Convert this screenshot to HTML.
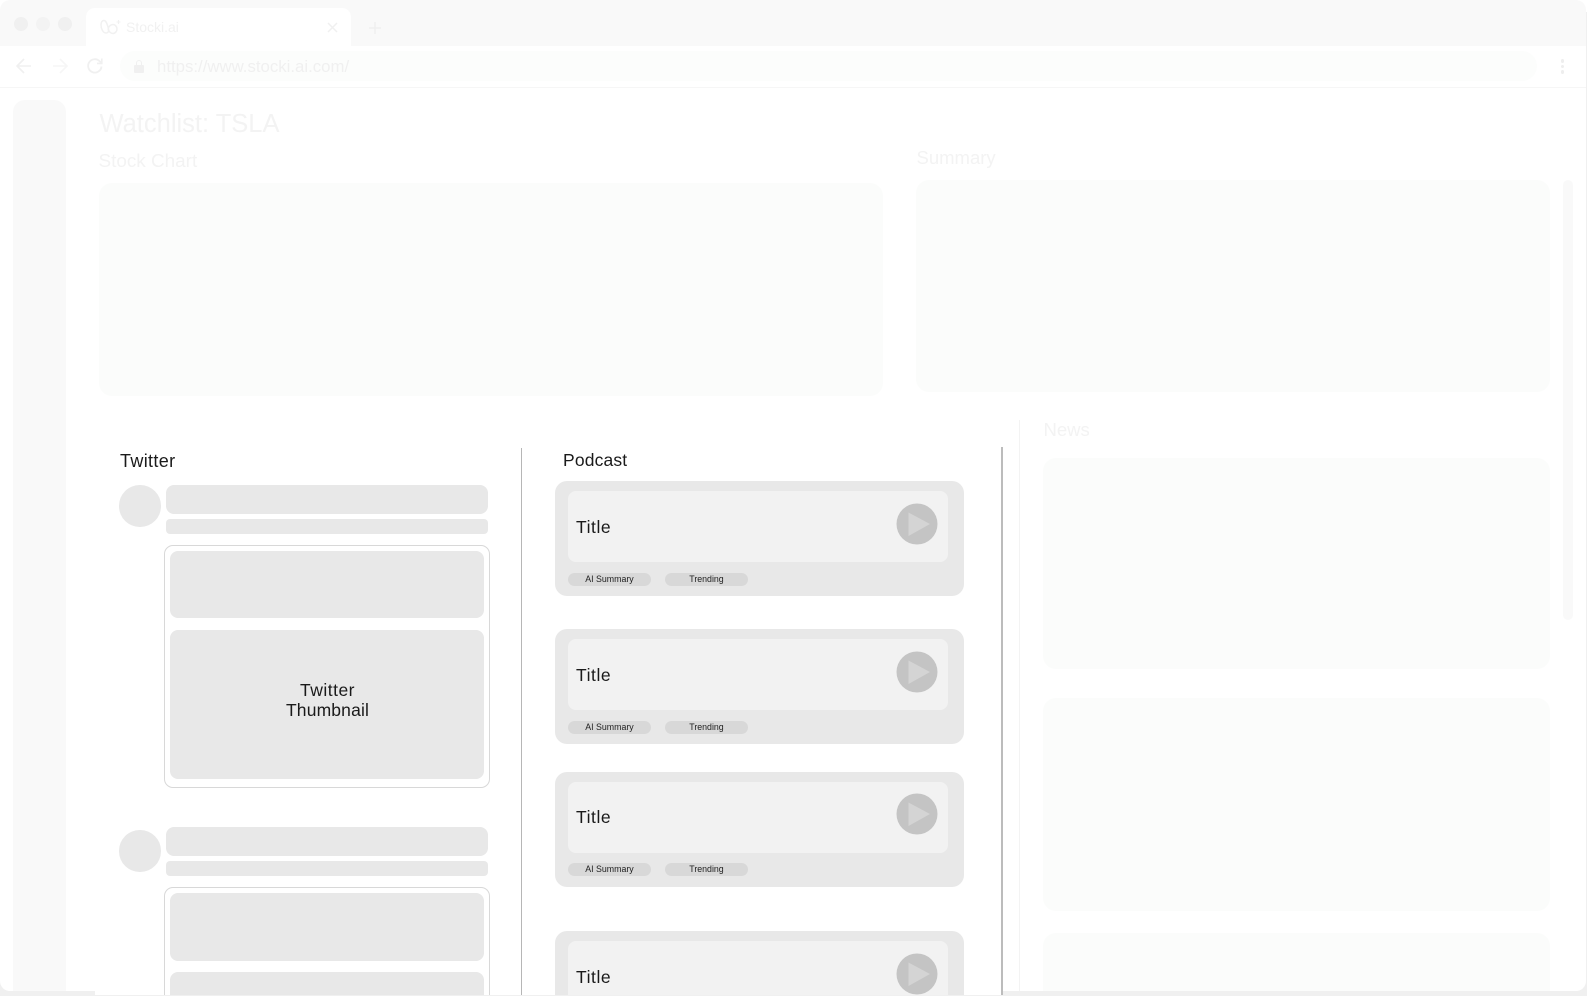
<!DOCTYPE html>
<html>
<head>
<meta charset="utf-8">
<title>Stocki.ai</title>
<style>
html,body{margin:0;padding:0;background:#fff;width:1587px;height:996px;overflow:hidden}
#p{position:relative;width:1587px;height:996px;overflow:hidden;background:#f0f0f0;font-family:"Liberation Sans",sans-serif}
#p div,#p svg{position:absolute}
.t{white-space:nowrap;color:#1a1a1a;line-height:1}
.g{color:#f3f3f3}
.f{background:#fbfcfb;border-radius:13px}
.e{background:#e8e8e8}
.pc{left:555px;width:408.500px;height:115px;background:#e8e8e8;border-radius:12px}
.pi{left:13px;top:10px;width:380px;height:71px;background:#f2f2f2;border-radius:8px}
.pl{top:91.500px;width:83px;height:13px;border-radius:7px;background:#d8d8d8;font-size:8.800px;line-height:13px;text-align:center;color:#222}
.pt{left:21px;top:37.500px;font-size:17.500px;letter-spacing:.55px}
</style>
</head>
<body>
<div id="p">
<div style="left:0;top:0;width:12px;height:12px;background:#fff"></div>
<div style="right:0;top:0;width:12px;height:12px;background:#fff"></div>
<div style="left:0;top:0;width:1586px;height:991px;background:#fff;border-radius:10px"></div>
<div style="left:0;top:0;width:1586px;height:46px;background:#f9f9f9;border-radius:10px 10px 0 0"></div>
<div style="left:14px;top:17px;width:14px;height:14px;border-radius:50%;background:#f0f0f0"></div>
<div style="left:36px;top:17px;width:14px;height:14px;border-radius:50%;background:#f3f3f3"></div>
<div style="left:58px;top:17px;width:14px;height:14px;border-radius:50%;background:#f0f0f0"></div>
<div style="left:86px;top:8px;width:265px;height:38px;background:#fff;border-radius:9px 9px 0 0"></div>
<svg style="left:98px;top:16px" width="24" height="22" viewBox="0 0 24 22" fill="none" stroke="#f1f1f1" stroke-width="1.500"><path d="M6 4.500c-2 0-3 2-3 4.500 0 3.500 2 8 5 8s3-3 2-6C9 7.500 8 4.500 6 4.500z"/><path d="M10 13c1-3 2.500-4.500 5-4.500 2 0 4 2 4 4.500s-2 4.500-4 4.500c-2.500 0-4-2-5-4.500"/><path d="M20.500 4v4M18.500 6h4" stroke-width="1.100"/></svg>
<div class="t g" style="left:126px;top:20px;font-size:14px;color:#f1f1f1">Stocki.ai</div>
<svg style="left:326px;top:21px" width="13" height="13" viewBox="0 0 13 13" stroke="#f0f0f0" stroke-width="1.500"><path d="M2 2l9 9M11 2l-9 9"/></svg>
<svg style="left:367.500px;top:21px" width="14" height="14" viewBox="0 0 14 14" stroke="#f0f0f0" stroke-width="1.500"><path d="M7 1v12M1 7h12"/></svg>
<div style="left:0;top:87px;width:1586px;height:1px;background:#f6f6f6"></div>
<svg style="left:15px;top:57px" width="18" height="18" viewBox="0 0 18 18" fill="none" stroke="#f0f0f0" stroke-width="1.600"><path d="M16 9H2M9 2L2 9l7 7"/></svg>
<svg style="left:51px;top:57px" width="18" height="18" viewBox="0 0 18 18" fill="none" stroke="#f6f6f6" stroke-width="1.600"><path d="M2 9h14M9 2l7 7-7 7"/></svg>
<svg style="left:86px;top:57px" width="18" height="18" viewBox="0 0 18 18" fill="none" stroke="#f0f0f0" stroke-width="1.800"><path d="M15.500 9.500a6.700 6.700 0 1 1-1.800-5.200L15.500 6"/><path d="M15.800 1.500V6.400H11" stroke-width="1.600"/></svg>
<div style="left:120px;top:51px;width:1417px;height:30px;border-radius:15px;background:#fcfdfc"></div>
<div style="left:134px;top:65px;width:10px;height:8px;background:#f0f0f0;border-radius:1px"></div>
<div style="left:136px;top:60px;width:4px;height:5px;border:1.300px solid #f0f0f0;border-bottom:0;border-radius:3px 3px 0 0"></div>
<div class="t" style="left:157px;top:59px;font-size:16.800px;color:#f0f0f0">https://www.stocki.ai.com/</div>
<div style="left:1560.500px;top:59px;width:3.500px;height:3.500px;border-radius:50%;background:#eee"></div>
<div style="left:1560.500px;top:64.500px;width:3.500px;height:3.500px;border-radius:50%;background:#eee"></div>
<div style="left:1560.500px;top:70px;width:3.500px;height:3.500px;border-radius:50%;background:#eee"></div>

<div style="left:13px;top:100px;width:53px;height:891px;background:#f9f9f9;border-radius:12px 12px 0 0"></div>
<div class="t g" style="left:99.500px;top:111.500px;font-size:25.500px">Watchlist: TSLA</div>
<div class="t g" style="left:98.500px;top:153px;font-size:18.900px">Stock Chart</div>
<div class="t g" style="left:916.500px;top:148.500px;font-size:18.500px">Summary</div>
<div class="f" style="left:98.500px;top:183px;width:784.500px;height:213px"></div>
<div class="f" style="left:916px;top:180px;width:634px;height:212px"></div>
<div style="left:1563px;top:180px;width:10px;height:440px;background:#f9f9f9;border-radius:5px"></div>
<div style="left:1019px;top:420px;width:1px;height:571px;background:#f3f3f3"></div>
<div class="t g" style="left:1043.500px;top:420.500px;font-size:18.500px">News</div>
<div class="f" style="left:1043px;top:458px;width:507px;height:211px"></div>
<div class="f" style="left:1043px;top:698px;width:507px;height:213px"></div>
<div class="f" style="left:1043px;top:933px;width:507px;height:58px;border-radius:13px 13px 0 0"></div>

<div style="left:95px;top:420px;width:908px;height:575px;background:#fff;border-radius:10px 10px 0 0"></div>
<div style="left:521px;top:448px;width:1.300px;height:547px;background:#b6b6b6"></div>
<div style="left:1001px;top:447px;width:1.600px;height:548px;background:#bcbcbc"></div>

<div class="t" style="left:120px;top:452px;font-size:18px;letter-spacing:.35px">Twitter</div>
<div class="e" style="left:119px;top:485px;width:41.500px;height:41.500px;border-radius:50%"></div>
<div class="e" style="left:166px;top:485px;width:322px;height:28.500px;border-radius:8px"></div>
<div class="e" style="left:166px;top:519px;width:322px;height:14.500px;border-radius:4px"></div>
<div style="left:164px;top:545px;width:324px;height:241px;border:1.500px solid #d8d8d8;border-radius:9px"></div>
<div class="e" style="left:170px;top:550.500px;width:314px;height:67.500px;border-radius:8px"></div>
<div class="e" style="left:170px;top:630px;width:314px;height:148.500px;border-radius:8px"></div>
<div class="t" style="left:170.500px;top:679.500px;width:314px;text-align:center;font-size:17.500px;line-height:20px;white-space:normal;letter-spacing:.15px"><span style="letter-spacing:.5px">Twitter</span><br>Thumbnail</div>

<div class="e" style="left:119px;top:830px;width:41.500px;height:41.500px;border-radius:50%"></div>
<div class="e" style="left:166px;top:827px;width:322px;height:29px;border-radius:8px"></div>
<div class="e" style="left:166px;top:861px;width:322px;height:15px;border-radius:4px"></div>
<div style="left:164px;top:887px;width:324px;height:109px;border:1.500px solid #d8d8d8;border-bottom:0;border-radius:9px 9px 0 0"></div>
<div class="e" style="left:170px;top:892.500px;width:314px;height:68px;border-radius:8px"></div>
<div class="e" style="left:170px;top:972px;width:314px;height:24px;border-radius:8px 8px 0 0"></div>

<div class="t" style="left:563px;top:452px;font-size:17.500px;letter-spacing:.15px">Podcast</div>

<div class="pc" style="top:481px"><div class="pi"></div><div class="t pt">Title</div><svg style="left:341px;top:21.500px" width="42" height="42" viewBox="0 0 42 42"><circle cx="21" cy="21" r="20.500" fill="#c4c4c4"/><path d="M12.500 9.500L34 21 12.500 33z" fill="#d4d4d4"/></svg><div class="pl" style="left:13px">AI Summary</div><div class="pl" style="left:110px">Trending</div></div>
<div class="pc" style="top:629px"><div class="pi"></div><div class="t pt">Title</div><svg style="left:341px;top:21.500px" width="42" height="42" viewBox="0 0 42 42"><circle cx="21" cy="21" r="20.500" fill="#c4c4c4"/><path d="M12.500 9.500L34 21 12.500 33z" fill="#d4d4d4"/></svg><div class="pl" style="left:13px">AI Summary</div><div class="pl" style="left:110px">Trending</div></div>
<div class="pc" style="top:771.500px"><div class="pi"></div><div class="t pt">Title</div><svg style="left:341px;top:21.500px" width="42" height="42" viewBox="0 0 42 42"><circle cx="21" cy="21" r="20.500" fill="#c4c4c4"/><path d="M12.500 9.500L34 21 12.500 33z" fill="#d4d4d4"/></svg><div class="pl" style="left:13px">AI Summary</div><div class="pl" style="left:110px">Trending</div></div>
<div class="pc" style="top:931px;height:65px;overflow:hidden;border-radius:12px 12px 0 0"><div class="pi"></div><div class="t pt">Title</div><svg style="left:341px;top:21.500px" width="42" height="42" viewBox="0 0 42 42"><circle cx="21" cy="21" r="20.500" fill="#c4c4c4"/><path d="M12.500 9.500L34 21 12.500 33z" fill="#d4d4d4"/></svg></div>

<div style="left:0;top:995px;width:1587px;height:1px;background:#f0f0f0"></div>
</div>
</body>
</html>
